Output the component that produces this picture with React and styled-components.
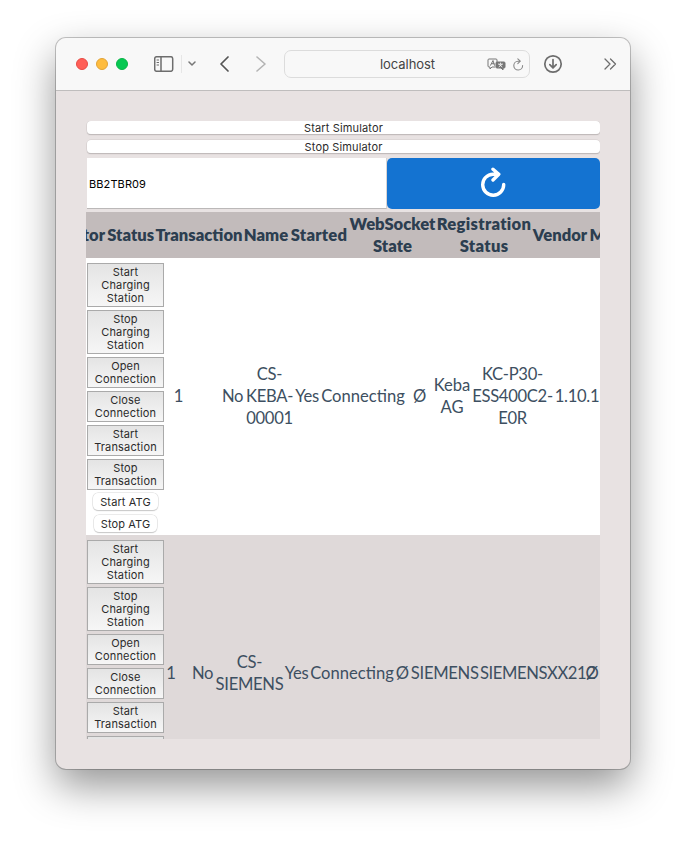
import React from "react";
import styled, { createGlobalStyle } from "styled-components";

const GlobalStyle = createGlobalStyle`
  * { box-sizing: border-box; }
  body { margin: 0; background: #fff; }
`;

const Desktop = styled.main`
  width: 686px;
  height: 843px;
  padding: 38px 56px 0;
  overflow: hidden;
  background: #fff;
`;

const BrowserWindow = styled.section`
  width: 574px;
  height: 731px;
  overflow: hidden;
  border-radius: 10px;
  background: #e8e2e2;
  box-shadow: 0 0 0 1px rgba(0, 0, 0, 0.22), 0 17px 40px rgba(0, 0, 0, 0.42);
`;

const Toolbar = styled.header`
  display: flex;
  align-items: center;
  height: 53px;
  padding-left: 20px;
  border-bottom: 1px solid #bfbdbd;
  background: #f8f8f8;
`;

const Lights = styled.div`
  display: flex;
  gap: 8px;
`;

const Light = styled.span`
  width: 12px;
  height: 12px;
  border-radius: 50%;
  background: ${(p) => p.$fill};
  border: 1px solid ${(p) => p.$edge};
`;

const Icon = styled.svg`
  flex: none;
  display: block;
  margin-left: ${(p) => p.$left || 0}px;
  fill: none;
  stroke: ${(p) => p.$color || "#6d6d6d"};
  stroke-width: ${(p) => p.$weight || 1.5};
  stroke-linecap: round;
  stroke-linejoin: round;
`;

const Divider = styled.span`
  width: 1px;
  height: 18px;
  margin-left: 7px;
  background: #e6e6e6;
`;

const AddressBar = styled.div`
  display: flex;
  align-items: center;
  flex: none;
  width: 246px;
  height: 28px;
  margin-left: 17px;
  padding-left: 95px;
  border: 1px solid #dcdcdc;
  border-radius: 7px;
  font: 13px/16px Inter, sans-serif;
  letter-spacing: -0.06px;
  color: #444;
`;

const Host = styled.span`
  width: 107px;
`;

const Page = styled.div`
  height: 678px;
  padding: 30px 30px 0;
`;

const Viewport = styled.div`
  height: 618px;
  overflow: hidden;
`;

const SimulatorButton = styled.button`
  display: block;
  width: 513px;
  height: 13px;
  margin: 0 0 6px 1px;
  padding: 1px 0 0;
  border: 0;
  border-radius: 4px;
  background: #fff;
  box-shadow: 0 0 0 0.5px #d2cccc, 0 1px 1px #aaa5a5;
  font: 11px/13px Inter, sans-serif;
  letter-spacing: 0.14px;
  color: #2b2b2b;
`;

const Controls = styled.div`
  display: flex;
  height: 51px;
  margin: -1px 0 3px;
`;

const HashField = styled.input`
  width: 300px;
  height: 51px;
  margin: 0 0 0 1px;
  padding: 1px 0 0 2px;
  border: 0;
  border-right: 1px solid #d8d4d4;
  border-bottom: 1px solid #bbb8b8;
  outline: 0;
  background: #fff;
  font: 11px Inter, sans-serif;
  letter-spacing: 0.1px;
  color: #000;
`;

const RefreshButton = styled.button`
  display: flex;
  align-items: center;
  justify-content: center;
  width: 213px;
  height: 51px;
  padding: 0 2px 2px 0;
  border: 0;
  border-radius: 5px;
  background: #1473d1;
`;

const TableHead = styled.div`
  display: grid;
  grid-template-columns: 19px 47.5px 85px 45px 57px 86px 93px 55px 40px;
  column-gap: 2px;
  align-items: center;
  height: 46px;
  overflow: hidden;
  background: #c2bbbb;
  font: 800 16.6px/22px Lato, sans-serif;
  color: #2c3e50;
`;

const HeadCell = styled.div`
  display: flex;
  justify-content: ${(p) => p.$align || "center"};
  padding-bottom: 1px;
  white-space: pre;
  text-align: center;
  letter-spacing: ${(p) => p.$track || 0}px;
`;

const Row = styled.div`
  display: grid;
  grid-template-columns: ${(p) => p.$columns};
  align-items: center;
  height: 277px;
  overflow: hidden;
  background: ${(p) => p.$background};
  font: 400 16.6px/22px Lato, sans-serif;
  color: #3d4f61;
`;

const Cell = styled.div`
  display: flex;
  justify-content: ${(p) => p.$align || "center"};
  padding-bottom: 1px;
  white-space: pre;
  text-align: center;
  letter-spacing: ${(p) => p.$track ?? -0.3}px;
`;

const Actions = styled.div`
  display: flex;
  flex-direction: column;
  align-items: center;
  align-self: start;
  gap: 3px;
  padding: 5px 0 0 1px;
`;

const ActionButton = styled.button`
  width: 77px;
  height: ${(p) => (p.$lines === 3 ? 44 : 31)}px;
  padding: 0;
  border: 1px solid #aaa;
  background: linear-gradient(#e4e4e4, #f6f6f6);
  font: 11px/13px Inter, sans-serif;
  letter-spacing: 0.16px;
  white-space: pre;
  color: #2b2b2b;
`;

const PillButton = styled.button`
  width: ${(p) => p.$width}px;
  height: 17px;
  margin: 0 0 2px;
  padding: 1px 0 0;
  border: 0;
  border-radius: 5px;
  background: #fff;
  box-shadow: 0 0 0 0.5px #d8d8d8, 0 1px 1px #bbb;
  font: 11px/15px Inter, sans-serif;
  letter-spacing: 0.12px;
  color: #2b2b2b;
`;

const actions = [
  "Start\nCharging\nStation",
  "Stop\nCharging\nStation",
  "Open\nConnection",
  "Close\nConnection",
  "Start\nTransaction",
  "Stop\nTransaction",
];

const headings = [
  ["Connector", 0, "flex-end"],
  ["Status", 0],
  ["Transaction", 0],
  ["Name", 0],
  ["Started", 0.2],
  ["WebSocket\nState", 0],
  ["Registration\nStatus", 0.3],
  ["Vendor", 0],
  ["Model", 0, "flex-start"],
];

const stations = [
  {
    background: "#fff",
    columns: "78px 29px 27px 25px 49px 26px 86px 27px 38px 83px 46px",
    cells: [
      ["1"], [""], ["No"], ["CS-\nKEBA-\n00001"], ["Yes"], ["Connecting", 0],
      ["Ø"], ["Keba\nAG", 0], ["KC-P30-\nESS400C2-\nE0R"], ["1.10.1"],
    ],
  },
  {
    background: "#dfd9d9",
    columns: "78px 14px 12px 25px 69px 25px 86px 14.5px 70.5px 109px 6px",
    cells: [
      ["1"], [""], ["No"], ["CS-\nSIEMENS"], ["Yes"], ["Connecting", 0],
      ["Ø"], ["SIEMENS"], ["SIEMENSXX212", -0.4, "flex-start"], ["Ø"],
    ],
  },
];

function StationRow({ station }) {
  return (
    <Row $columns={station.columns} $background={station.background}>
      <Actions>
        {actions.map((label) => (
          <ActionButton key={label} $lines={label.split("\n").length}>{label}</ActionButton>
        ))}
        <PillButton $width={65}>Start ATG</PillButton>
        <PillButton $width={63}>Stop ATG</PillButton>
      </Actions>
      {station.cells.map(([text, track, align], i) => (
        <Cell key={i} $track={track} $align={align}>{text}</Cell>
      ))}
    </Row>
  );
}

export default function App() {
  return (
    <Desktop>
      <GlobalStyle />
      <BrowserWindow>
        <Toolbar>
          <Lights>
            <Light $fill="#ff5f57" $edge="#e84b45" />
            <Light $fill="#febc3e" $edge="#e2a336" />
            <Light $fill="#06c852" $edge="#09b447" />
          </Lights>
          <Icon $left={26} $weight={1.5} width="20" height="16" viewBox="0 0 20 16">
            <rect x="0.7" y="0.7" width="18" height="14.6" rx="2" />
            <path d="M7 1v14" />
            <path d="M3 4h1.6M3 6.5h1.6M3 9h1.6" strokeWidth="1" />
          </Icon>
          <Divider />
          <Icon $left={6} $color="#777" width="8" height="6" viewBox="0 0 8 6">
            <path d="M1 1l3 3 3-3" />
          </Icon>
          <Icon $left={23} $color="#555" $weight={1.7} width="11" height="16" viewBox="0 0 11 16">
            <path d="M9 1L2 8l7 7" />
          </Icon>
          <Icon $left={26} $color="#b4b4b4" $weight={1.6} width="11" height="16" viewBox="0 0 11 16">
            <path d="M1 1l8 7-8 7" />
          </Icon>
          <AddressBar>
            <Host>localhost</Host>
            <Icon $color="#777" $weight={1} width="19" height="13" viewBox="0 0 19 13">
              <path d="M8 9H5l-2 2V9H2Q1 9 1 8V2Q1 1 2 1h7q1 0 1 1v1" />
              <path d="M3.5 7.3L6 2.5l1.5 4.8M4.5 5.7H7" />
              <path d="M10 4h7q1 0 1 1v4q0 1-1 1h-1v2l-2-2h-4q-1 0-1-1V5q0-1 1-1z" fill="#777" />
              <path d="M11.5 6.2h4M13.5 5v1.2M12 8.8l3-2.5M12 6.3l3 2.5" stroke="#f8f8f8" strokeWidth="0.8" />
            </Icon>
            <Icon $left={6} $color="#888" $weight={1.1} width="12" height="13" viewBox="0 0 12 13">
              <path d="M8.3 3.2H6a4.4 4.4 0 1 0 4.6 4.3M5.8 0.8l2.5 2.4-2.5 2.4" />
            </Icon>
          </AddressBar>
          <Icon $left={13} $weight={1.7} width="20" height="20" viewBox="0 0 20 20">
            <circle cx="10" cy="10" r="8.2" />
            <path d="M10 5.5v8.4M6.8 10.7l3.2 3.2 3.2-3.2" />
          </Icon>
          <Icon $left={41} $weight={1.3} width="13" height="12" viewBox="0 0 13 12">
            <path d="M1 1l5 5-5 5M6.5 1l5 5-5 5" />
          </Icon>
        </Toolbar>
        <Page>
          <Viewport>
            <SimulatorButton>Start Simulator</SimulatorButton>
            <SimulatorButton>Stop Simulator</SimulatorButton>
            <Controls>
              <HashField defaultValue="BB2TBR09" />
              <RefreshButton aria-label="Refresh">
                <Icon $color="#fff" $weight={3.4} width="26" height="31" viewBox="0 0 26 31">
                  <path d="M16 7.2H13A10.5 10.5 0 1 0 23.7 17.5M13 2.2l5.8 5-5.8 5.8" />
                </Icon>
              </RefreshButton>
            </Controls>
            <TableHead>
              {headings.map(([text, track, align]) => (
                <HeadCell key={text} $track={track} $align={align}>{text}</HeadCell>
              ))}
            </TableHead>
            {stations.map((station) => (
              <StationRow key={station.background} station={station} />
            ))}
          </Viewport>
        </Page>
      </BrowserWindow>
    </Desktop>
  );
}
